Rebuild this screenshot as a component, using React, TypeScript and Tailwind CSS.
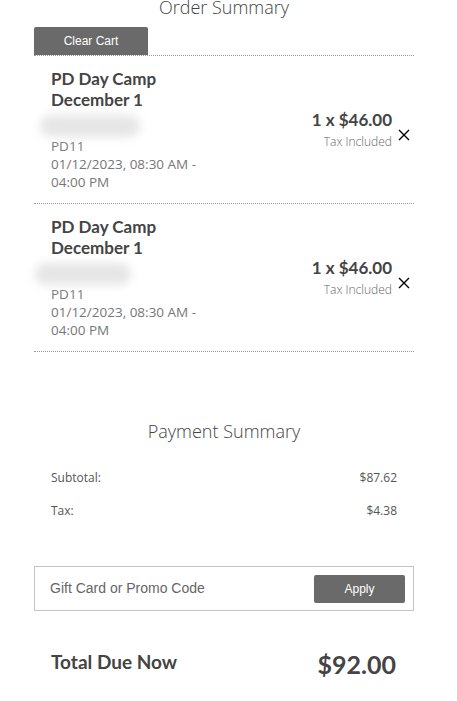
import React from "react";

const items = [
  { title: ["PD Day Camp", "December 1"], code: "PD11", when: ["01/12/2023, 08:30 AM -", "04:00 PM"], qty: 1, price: "$46.00", blur: "ml-[-11px] w-[100px]" },
  { title: ["PD Day Camp", "December 1"], code: "PD11", when: ["01/12/2023, 08:30 AM -", "04:00 PM"], qty: 1, price: "$46.00", blur: "ml-[-16px] w-[96px]" },
];

function CartItem({ item }: { item: (typeof items)[number] }) {
  return (
    <div className="flex items-center border-b border-dotted border-[#9a9a9a] pl-[17px] pr-[3px] pt-[12px] pb-[12px]">
      <div className="flex-1">
        <div className="font-['Lato',sans-serif] text-[17px] font-bold leading-[21px] text-[#444]">
          {item.title.map((t) => (
            <div key={t}>{t}</div>
          ))}
        </div>
        {/* name hidden */}
        <div className={`${item.blur} mt-[5px] h-[22px] rounded-full bg-[#e6e6e6] blur-[5px]`} />
        <div className="font-['Open_Sans',sans-serif] text-[13.5px] leading-[18px] text-[#777]">
          <div>{item.code}</div>
          {item.when.map((w) => (
            <div key={w}>{w}</div>
          ))}
        </div>
      </div>
      <div className="flex items-center">
        <div className="text-right">
          <div className="font-['Lato',sans-serif] text-[17px] font-bold leading-[20px] text-[#444]">
            {item.qty} x {item.price}
          </div>
          <div className="mt-[4px] font-['Open_Sans',sans-serif] text-[12px] font-light leading-[16px] text-[#666]">
            Tax Included
          </div>
        </div>
        <button className="ml-[5px] mt-[10px] flex h-[14px] w-[14px] items-center justify-center text-black">
          <svg width="12" height="12" viewBox="0 0 12 12" fill="none" stroke="currentColor" strokeWidth="1.4">
            <path d="M1 1 L11 11 M11 1 L1 11" />
          </svg>
        </button>
      </div>
    </div>
  );
}

export default function App() {
  return (
    <div className="min-h-[701px] w-full bg-white">
      <div className="ml-[34px] w-[380px]">
        {/* order summary */}
        <h2 className="-mt-[6px] text-center font-['Open_Sans',sans-serif] text-[18px] font-light leading-[26px] text-[#444]">
          Order Summary
        </h2>
        <button className="mt-[7px] h-[28px] w-[114px] rounded-t-[2px] bg-[#6a6a6a] font-['Liberation_Sans',sans-serif] text-[12px] text-white">
          Clear Cart
        </button>
        <div className="border-t border-dotted border-[#9a9a9a]">
          {items.map((it, i) => (
            <CartItem key={i} item={it} />
          ))}
        </div>

        {/* payment summary */}
        <h2 className="mt-[66px] text-center font-['Open_Sans',sans-serif] text-[18px] font-light leading-[26px] text-[#444]">
          Payment Summary
        </h2>
        <div className="mt-[26px] px-[17px] font-['Open_Sans',sans-serif] text-[12px] leading-[16px] text-[#555]">
          <div className="flex justify-between">
            <span>Subtotal:</span>
            <span>$87.62</span>
          </div>
          <div className="mt-[17px] flex justify-between">
            <span>Tax:</span>
            <span>$4.38</span>
          </div>
        </div>

        {/* promo */}
        <div className="mt-[47px] flex h-[45px] items-center border border-[#c4c4c4] pl-[15px] pr-[8px]">
          <input
            placeholder="Gift Card or Promo Code"
            className="min-w-0 flex-1 font-['Liberation_Sans',sans-serif] text-[14px] text-[#555] outline-none placeholder:text-[#666]"
          />
          <button className="h-[28px] w-[91px] rounded-[2px] bg-[#6a6a6a] font-['Liberation_Sans',sans-serif] text-[12px] text-white">
            Apply
          </button>
        </div>

        {/* total */}
        <div className="mt-[29px] flex items-center justify-between pl-[17px] pr-[18px]">
          <span className="font-['Lato',sans-serif] text-[19px] font-bold text-[#444]">Total Due Now</span>
          <span className="mt-[6px] font-['Lato',sans-serif] text-[25px] font-bold text-[#444]">$92.00</span>
        </div>
      </div>
    </div>
  );
}
